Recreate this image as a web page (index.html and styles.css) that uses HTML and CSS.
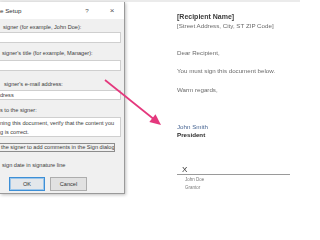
FILE: index.html
```html
<!DOCTYPE html>
<html>
<head>
<meta charset="utf-8">
<link rel="stylesheet" href="styles.css">
</head>
<body>
<div class="topband"></div>
<div class="main">
  <div class="dialog">
    <div class="titlebar">
      <span class="title">e Setup</span>
      <span class="ctl help">?</span>
      <span class="ctl close">×</span>
    </div>
    <div class="dbody">
      <div class="label l1">signer (for example, John Doe):</div>
      <div class="field f1"></div>
      <div class="label l2">signer's title (for example, Manager):</div>
      <div class="field f2"></div>
      <div class="label l3">signer's e-mail address:</div>
      <div class="field f3">dress</div>
      <div class="label l4">s to the signer:</div>
      <div class="field area">ning this document, verify that the content you<br>g is correct.</div>
      <div class="check focus">the signer to add comments in the Sign dialog</div>
      <div class="check c2">sign date in signature line</div>
      <div class="buttons">
        <div class="btn default">OK</div>
        <div class="btn">Cancel</div>
      </div>
    </div>
  </div>
  <div class="doc">
    <div class="rname">[Recipient Name]</div>
    <div class="line addr">[Street Address, City, ST ZIP Code]</div>
    <div class="line dear">Dear Recipient,</div>
    <div class="line must">You must sign this document below.</div>
    <div class="line warm">Warm regards,</div>
    <div class="jsmith">John Smith</div>
    <div class="pres">President</div>
    <div class="sigline"><span class="x">X</span></div>
    <div class="sub s1">John Doe</div>
    <div class="sub s2">Grantor</div>
  </div>
</div>
<svg class="arrow" width="300" height="200" viewBox="0 0 300 200">
  <line x1="105" y1="80" x2="153" y2="118.5" stroke="#e4387d" stroke-width="1.7"/>
  <polygon points="161,125 155.5,114.2 149.3,122" fill="#e4387d"/>
</svg>
</body>
</html>
```
FILE: styles.css
```css
html, body {
  margin: 0;
  padding: 0;
  width: 300px;
  height: 200px;
  overflow: hidden;
  background: #ffffff;
  font-family: "Liberation Sans", Arial, sans-serif;
  -webkit-font-smoothing: antialiased;
}
.topband {
  height: 2px;
  background: #ebebeb;
}
.main {
  display: flex;
  align-items: flex-start;
}
.dialog {
  width: 124px;
  height: 191px;
  background: #f0f0f0;
  border-right: 1px solid #9a9a9a;
  border-bottom: 1px solid #9a9a9a;
  box-shadow: 1px 1px 3px rgba(0,0,0,0.25);
  display: flex;
  flex-direction: column;
  color: #3c3c3c;
  font-size: 5.6px;
}
.titlebar {
  height: 17px;
  background: #ffffff;
  display: flex;
  align-items: center;
  font-size: 6.2px;
  color: #333;
  padding-right: 7px;
}
.title { flex: 1; }
.ctl {
  width: 10px;
  text-align: center;
  color: #555;
}
.help { margin-right: 15px; font-size: 6.2px; }
.close { font-size: 8px; }
.dbody {
  display: flex;
  flex-direction: column;
  padding-right: 3px;
}
.label {
  line-height: 8px;
  height: 8px;
  white-space: nowrap;
}
.l1 { margin-top: 4px; padding-left: 3px; }
.l2 { margin-top: 6px; padding-left: 2px; }
.l3 { margin-top: 9px; padding-left: 4px; }
.l4 { margin-top: 6px; }
.field {
  background: #ffffff;
  border: 1px solid #cfcfcf;
  border-left: none;
  box-sizing: border-box;
  white-space: nowrap;
  overflow: hidden;
}
.f1 { margin-top: 1px; height: 11px; }
.f2 { margin-top: 3px; height: 11px; }
.f3 { margin-top: 2px; height: 10px; line-height: 8px; }
.area {
  margin-top: 3px;
  height: 20px;
  line-height: 8.5px;
  padding-top: 1px;
}
.check {
  white-space: nowrap;
  line-height: 8px;
}
.focus {
  margin-top: 6px;
  height: 9px;
  width: 115px;
  box-sizing: border-box;
  border: 1px solid #8c8c8c;
  border-left: none;
  padding-left: 1px;
  line-height: 7px;
  overflow: hidden;
}
.c2 { margin-top: 9px; padding-left: 2px; height: 8px; }
.buttons {
  display: flex;
  gap: 5px;
  margin-top: 8px;
  padding-left: 9px;
}
.btn {
  width: 37px;
  height: 14px;
  box-sizing: border-box;
  background: #e1e1e1;
  border: 1px solid #adadad;
  display: flex;
  align-items: center;
  justify-content: center;
  color: #333;
}
.btn.default {
  width: 36px;
  border: 1px solid #3d8fd6;
  box-shadow: inset 0 0 0 1px #9cc6ea;
  background: #e3e7eb;
}
.doc {
  flex: 1;
  padding-left: 52px;
  display: flex;
  flex-direction: column;
  color: #6a6a6a;
  font-size: 6.2px;
  will-change: transform;
}
.rname {
  margin-top: 10.5px;
  font-size: 7px;
  font-weight: bold;
  line-height: 8px;
  color: #3a3a3a;
}
.line { line-height: 8px; white-space: nowrap; }
.addr { margin-top: 1px; }
.dear { margin-top: 19px; }
.must { margin-top: 10.5px; }
.warm { margin-top: 11px; }
.jsmith {
  margin-top: 29px;
  line-height: 7.5px;
  color: #4a6794;
}
.pres {
  line-height: 7.5px;
  font-weight: bold;
  color: #2a2a2a;
}
.sigline {
  margin-top: 27.75px;
  width: 108px;
  height: 8px;
  border-bottom: 1px solid #9a9a9a;
  padding-left: 5px;
  box-sizing: content-box;
  line-height: 8px;
}
.x {
  font-size: 8px;
  color: #333;
}
.sub {
  padding-left: 8px;
  font-size: 4.5px;
  line-height: 6px;
  margin-top: 2px;
  color: #7a7a7a;
}
.arrow {
  position: absolute;
  left: 0;
  top: 0;
  pointer-events: none;
}
```
